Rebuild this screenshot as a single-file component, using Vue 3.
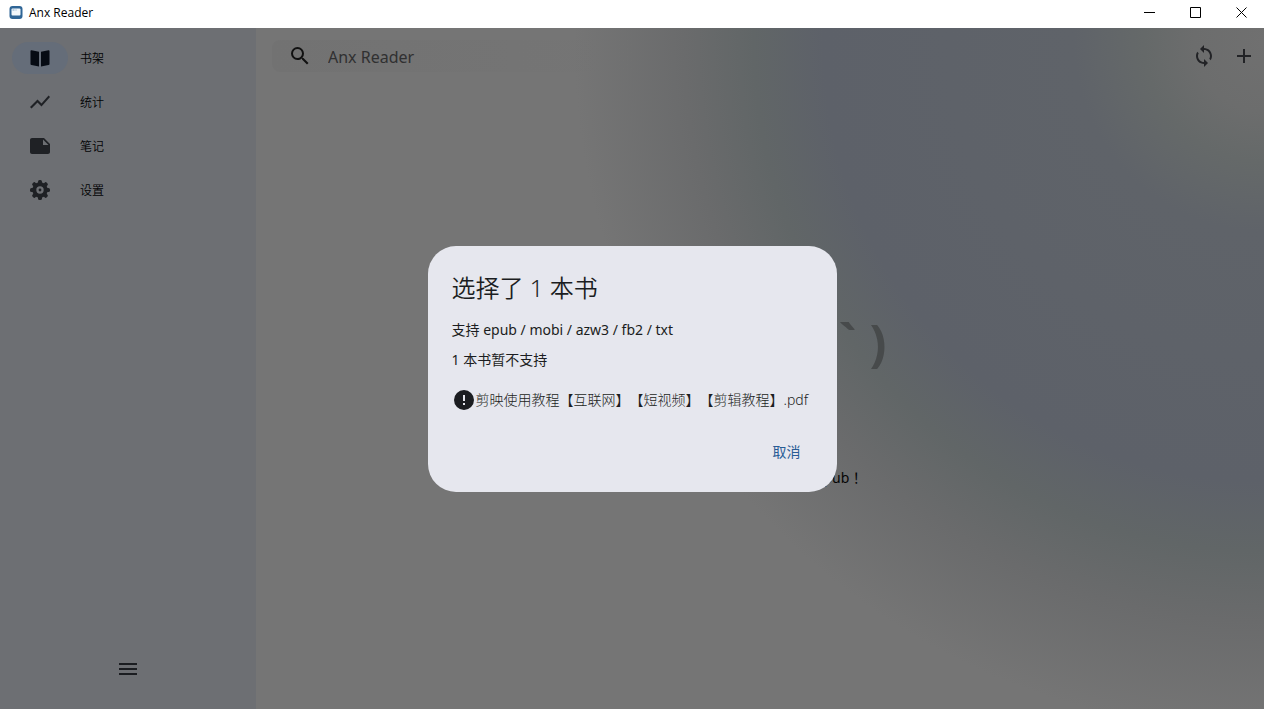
<script setup>
const items = [
  { id: 'shelf', label: '书架', active: true },
  { id: 'stats', label: '统计' },
  { id: 'notes', label: '笔记' },
  { id: 'settings', label: '设置' }
]
const petals = [0, 45, 90, 135, 180, 225, 270, 315]
</script>

<template>
  <div class="window">
    <header class="titlebar">
      <svg class="logo" viewBox="0 0 14 14" aria-hidden="true">
        <rect x=".5" width="13" height="13" rx="3" fill="#2f6596" />
        <rect x="2.500" y="2.500" width="9" height="7" rx="1" fill="#f2f7fb" />
        <path d="M3.500 3.500h2v1h-2zM6.500 3.500h1v1h-1z" fill="#7fa5c6" />
      </svg>
      <span class="caption">Anx Reader</span>
      <div class="controls">
        <button aria-label="最小化"><svg viewBox="0 0 11 11"><path d="M0 5.500h11" /></svg></button>
        <button aria-label="最大化"><svg viewBox="0 0 11 11"><path d="M.5.5h10v10H.5z" /></svg></button>
        <button aria-label="关闭"><svg viewBox="0 0 11 11"><path d="M.5.5l10 10M10.500.5l-10 10" /></svg></button>
      </div>
    </header>

    <div class="body">
      <nav class="sidebar">
        <a v-for="item in items" :key="item.id" href="#" class="nav-item" :class="{ active: item.active }">
          <span class="indicator">
            <svg v-if="item.id === 'shelf'" class="icon" viewBox="0 0 24 24">
              <path d="M2.500 5Q2.500 4.200 3.500 4.300L11 5.800V20.500L3.500 19Q2.500 18.800 2.500 18zM21.500 5Q21.500 4.200 20.500 4.300L13 5.800V20.500L20.500 19Q21.500 18.800 21.500 18z" />
            </svg>
            <svg v-else-if="item.id === 'stats'" class="icon" viewBox="0 0 24 24">
              <path d="M3.500 18.490l6-6.010 4 4L22 6.920l-1.410-1.410-7.090 7.970-4-4L2 16.990z" />
            </svg>
            <svg v-else-if="item.id === 'notes'" class="icon" viewBox="0 0 24 24">
              <path fill-rule="evenodd" d="M4 4h12l6 6v8c0 1.100-.9 2-2 2H4c-1.100 0-2-.9-2-2V6c0-1.100.9-2 2-2zm11 1.500V11h5.500z" />
            </svg>
            <svg v-else class="icon" viewBox="0 0 24 24">
              <circle cx="12" cy="12" r="5.700" fill="none" stroke="currentColor" stroke-width="4" />
              <rect v-for="p in petals" :key="p" x="10" y="2" width="4" height="5" rx="1.600" :transform="`rotate(${p} 12 12)`" />
              <circle cx="12" cy="12" r="1.400" />
            </svg>
          </span>
          <span>{{ item.label }}</span>
        </a>
        <button class="menu" aria-label="菜单">
          <svg class="icon" viewBox="0 0 24 24"><path d="M3 6h18v2H3zM3 11h18v2H3zM3 16h18v2H3z" /></svg>
        </button>
      </nav>

      <main class="content">
        <div class="toolbar">
          <label class="search">
            <svg class="icon" viewBox="0 0 24 24">
              <path d="M15.500 14h-.79l-.28-.27A6.471 6.471 0 0 0 16 9.500 6.500 6.500 0 1 0 9.500 16c1.610 0 3.090-.59 4.230-1.570l.27.28v.79l5 4.990L20.490 19l-4.990-5zm-6 0C7.010 14 5 11.990 5 9.500S7.010 5 9.500 5 14 7.010 14 9.500 11.990 14 9.500 14z" />
            </svg>
            <input type="text" placeholder="Anx Reader" aria-label="搜索" />
          </label>
          <button class="tool" aria-label="同步">
            <svg class="icon" viewBox="0 0 24 24">
              <path d="M12 4V1L8 5l4 4V6c3.310 0 6 2.690 6 6 0 1.010-.25 1.970-.7 2.800l1.460 1.460A7.930 7.930 0 0 0 20 12c0-4.420-3.580-8-8-8zm0 14c-3.310 0-6-2.690-6-6 0-1.010.25-1.970.7-2.800L5.240 7.740A7.930 7.930 0 0 0 4 12c0 4.420 3.580 8 8 8v3l4-4-4-4v3z" />
            </svg>
          </button>
          <button class="tool" aria-label="添加">
            <svg class="icon" viewBox="0 0 24 24"><path d="M19 13h-6v6h-2v-6H5v-2h6V5h2v6h6v2z" /></svg>
          </button>
        </div>
        <div class="empty">
          <p class="face">( ´ ・ω・` )</p>
          <p class="hint">点击右上角 + 添加第一本 epub！</p>
        </div>
      </main>

      <div class="overlay">
        <section class="dialog" role="dialog" aria-modal="true" aria-labelledby="dialog-title">
          <h1 id="dialog-title">选择了 1 本书</h1>
          <p>支持 epub / mobi / azw3 / fb2 / txt</p>
          <p>1 本书暂不支持</p>
          <div class="file">
            <svg class="icon" viewBox="0 0 24 24">
              <path d="M12 2a10 10 0 1 0 0 20 10 10 0 0 0 0-20zm1 15h-2v-2h2v2zm0-4h-2V7h2v6z" />
            </svg>
            <span>剪映使用教程【互联网】【短视频】【剪辑教程】.pdf</span>
          </div>
          <button class="cancel">取消</button>
        </section>
      </div>
    </div>
  </div>
</template>

<style>
html, body, #app { height: 100%; }
body { margin: 0; }
</style>

<style scoped>
.window {
  display: flex;
  flex-direction: column;
  min-height: 100vh;
  font-family: "Noto Sans", "Noto Sans CJK SC", sans-serif;
  color: #1b1d21;
}
button { border: 0; padding: 0; background: none; color: inherit; font: inherit; }
.icon { display: block; flex: none; width: 24px; height: 24px; fill: currentColor; }

.titlebar { display: flex; align-items: center; height: 28px; box-sizing: border-box; padding: 0 0 3px 9px; background: #fff; color: #000; }
.logo { width: 14px; height: 14px; margin-right: 6px; }
.caption { font-family: "Open Sans", sans-serif; font-size: 12px; }
.controls { display: flex; height: 100%; margin-left: auto; }
.controls button { display: grid; place-items: center; width: 46px; }
.controls svg { width: 11px; height: 11px; fill: none; stroke: #000; stroke-width: 1; }

.body {
  position: relative;
  display: flex;
  flex: 1;
  background: radial-gradient(circle at 100% 2%, #707070 0, #6c6d6d 70px, #656969 120px, #5f6369 190px, #5d6169 440px, #616667 510px, #6a6b6c 580px, #757575 690px);
}
.sidebar { display: flex; flex-direction: column; width: 256px; padding-top: 8px; box-sizing: border-box; background: #6d6f73; }
.nav-item { display: flex; align-items: center; gap: 12px; height: 44px; padding-left: 12px; font-size: 12px; font-weight: 350; color: #020304; text-decoration: none; }
.indicator { display: grid; place-items: center; width: 56px; height: 32px; border-radius: 16px; color: #1f2125; }
.active .indicator { background: #656d79; color: #060b14; }
.menu { margin: auto auto 28px; }

.content { display: flex; flex: 1; flex-direction: column; }
.toolbar { display: flex; align-items: center; height: 56px; }
.search { display: flex; flex: 1; align-items: center; gap: 16px; height: 32px; margin-left: 16px; padding-left: 16px; border-radius: 8px; background: linear-gradient(to right, #727272, transparent 40%); color: #111; }
.search input { flex: 1; padding: 2px 0 0; border: 0; outline: 0; background: none; font: inherit; font-size: 16px; }
.search input::placeholder { color: #303031; opacity: 1; }
.tool { display: grid; place-items: center; width: 40px; height: 40px; color: #222326; }
.empty { display: flex; flex: 1; flex-direction: column; align-items: center; justify-content: center; padding-top: 26px; }
.empty p { margin: 0; line-height: 20px; }
.face { font-size: 50px; font-weight: 700; color: #474a4b; }
.empty .hint { margin-top: 116px; font-family: "Noto Sans", "Noto Sans CJK TC", sans-serif; font-size: 14px; color: #060606; }

.overlay { position: absolute; inset: 0; display: grid; place-items: center; }
.dialog { display: flex; flex-direction: column; box-sizing: border-box; min-width: 409px; padding: 24px; border-radius: 28px; background: #e6e7ee; font-size: 14px; line-height: 20px; }
.dialog h1 { margin: 0 0 14px; font-size: 24px; font-weight: 350; line-height: 36px; }
.dialog p { margin: 0 0 10px; }
.file { display: flex; align-items: center; margin-top: 8px; font-weight: 300; white-space: nowrap; text-spacing-trim: space-all; }
.cancel { align-self: flex-end; height: 32px; margin-top: 24px; padding: 0 12px; color: #285c95; }
</style>
